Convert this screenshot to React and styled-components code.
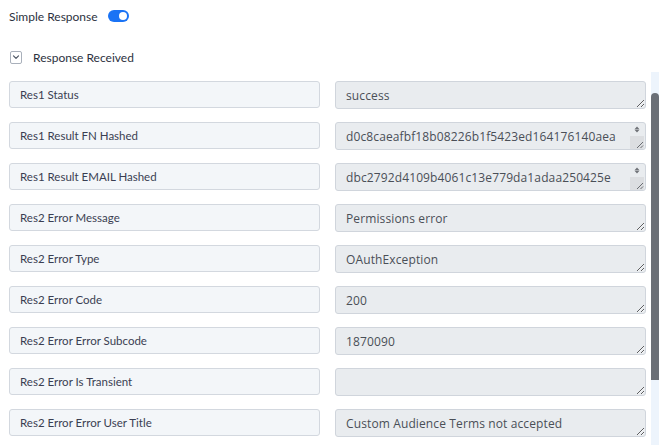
import React from 'react';
import styled, { createGlobalStyle } from 'styled-components';

const GlobalStyle = createGlobalStyle`
  html, body {
    margin: 0;
    padding: 0;
    background: #fff;
  }
  body {
    font-family: Lato, "Open Sans", sans-serif;
    color: #2f3442;
  }
`;

const Page = styled.div`
  width: 660px;
  height: 445px;
  position: relative;
  overflow: hidden;
`;

const Header = styled.div`
  display: flex;
  align-items: center;
  gap: 10px;
  height: 32px;
  padding-left: 9px;
  font-size: 12px;
  color: #2c3140;
`;

const Toggle = styled.span`
  position: relative;
  width: 21px;
  height: 12px;
  border-radius: 6px;
  background: ${({ $on }) => ($on ? '#1a73f5' : '#c5cad3')};
  &::after {
    content: '';
    position: absolute;
    top: 2px;
    left: ${({ $on }) => ($on ? '11px' : '2px')};
    width: 8px;
    height: 8px;
    border-radius: 50%;
    background: #fff;
  }
`;

const Collapse = styled.div`
  display: flex;
  align-items: center;
  gap: 11px;
  height: 18px;
  margin-top: 16px;
  padding-left: 10px;
  font-size: 12px;
  color: #2c3140;
`;

const CheckBox = styled.span`
  width: 10px;
  height: 11px;
  border: 1px solid #a9b0bb;
  border-radius: 2px;
  display: flex;
  align-items: center;
  justify-content: center;
`;

const Fields = styled.div`
  display: flex;
  flex-direction: column;
  gap: 13px;
  padding: 15px 0 0 9px;
`;

const Row = styled.div`
  display: grid;
  grid-template-columns: 311px 311px;
  column-gap: 15px;
  align-items: start;
`;

const Label = styled.div`
  box-sizing: border-box;
  height: 27px;
  display: flex;
  align-items: center;
  padding: 0 10px;
  border: 1px solid #d3d8df;
  border-radius: 3px;
  background: #f3f6f9;
  font-size: 11.5px;
  color: #3a3e52;
`;

const ValueBox = styled.div`
  position: relative;
  width: 311px;
`;

const Value = styled.textarea`
  box-sizing: border-box;
  width: 311px;
  height: 28px;
  margin: 0;
  padding: 6px ${({ $scroll }) => ($scroll ? '22px' : '10px')} 6px 10px;
  border: 1px solid #d0d5dc;
  border-radius: 3px;
  background: #e9ecef;
  font-family: "Open Sans", sans-serif;
  font-size: 12px;
  letter-spacing: 0.12px;
  line-height: 15px;
  color: #4a4f57;
  resize: vertical;
  outline: none;
  overflow: hidden;
  white-space: pre;
  display: block;
`;

/* the small scroll bar of a textarea whose text runs past one line */
const MiniScroll = styled.div`
  position: absolute;
  top: 1px;
  right: 2px;
  bottom: 1px;
  width: 14px;
  display: flex;
  flex-direction: column;
  pointer-events: none;
`;

const MiniArrow = styled.div`
  height: 13px;
  display: flex;
  align-items: center;
  justify-content: center;
`;

const MiniThumb = styled.div`
  flex: 1;
  background: #dcdee1;
  display: flex;
  align-items: flex-end;
  justify-content: flex-end;
  border-bottom-right-radius: 2px;
`;

const ChevronDown = () => (
  <svg width="8" height="6" viewBox="0 0 8 6" fill="none">
    <path d="M1.5 1.8 L4 4.3 L6.5 1.8" stroke="#4d5563" strokeWidth="1.2" strokeLinecap="round" strokeLinejoin="round" />
  </svg>
);

const UpDown = () => (
  <svg width="6" height="7" viewBox="0 0 6 7">
    <path d="M3 0.5 L5.5 3.2 L0.5 3.2 Z M0.5 3.8 L5.5 3.8 L3 6.5 Z" fill="#707378" />
  </svg>
);

const Grip = () => (
  <svg width="9" height="9" viewBox="0 0 9 9" fill="none">
    <path d="M8 2 L2 8 M8 5.5 L5.5 8" stroke="#6a6d72" strokeWidth="1" />
  </svg>
);

const Track = styled.div`
  position: absolute;
  top: 72px;
  right: 1px;
  bottom: 0;
  width: 8px;
  background: #edf4fc;
`;

const Thumb = styled.div`
  margin-top: 21px;
  height: 287px;
  border-radius: 4px 4px 0 0;
  background: #6b6f76;
`;

const fields = [
  ['Res1 Status', 'success'],
  ['Res1 Result FN Hashed', 'd0c8caeafbf18b08226b1f5423ed164176140aea', true],
  ['Res1 Result EMAIL Hashed', 'dbc2792d4109b4061c13e779da1adaa250425e', true],
  ['Res2 Error Message', 'Permissions error'],
  ['Res2 Error Type', 'OAuthException'],
  ['Res2 Error Code', '200'],
  ['Res2 Error Error Subcode', '1870090'],
  ['Res2 Error Is Transient', ''],
  ['Res2 Error Error User Title', 'Custom Audience Terms not accepted'],
];

export default function App() {
  return (
    <Page>
      <GlobalStyle />
      <Header>
        Simple Response
        <Toggle $on />
      </Header>
      <Collapse>
        <CheckBox>
          <ChevronDown />
        </CheckBox>
        Response Received
      </Collapse>
      <Fields>
        {fields.map(([label, value, scroll]) => (
          <Row key={label}>
            <Label>{label}</Label>
            <ValueBox>
              <Value readOnly rows={1} value={value} $scroll={scroll} />
              {scroll && (
                <MiniScroll>
                  <MiniArrow>
                    <UpDown />
                  </MiniArrow>
                  <MiniThumb>
                    <Grip />
                  </MiniThumb>
                </MiniScroll>
              )}
            </ValueBox>
          </Row>
        ))}
      </Fields>
      <Track>
        <Thumb />
      </Track>
    </Page>
  );
}
